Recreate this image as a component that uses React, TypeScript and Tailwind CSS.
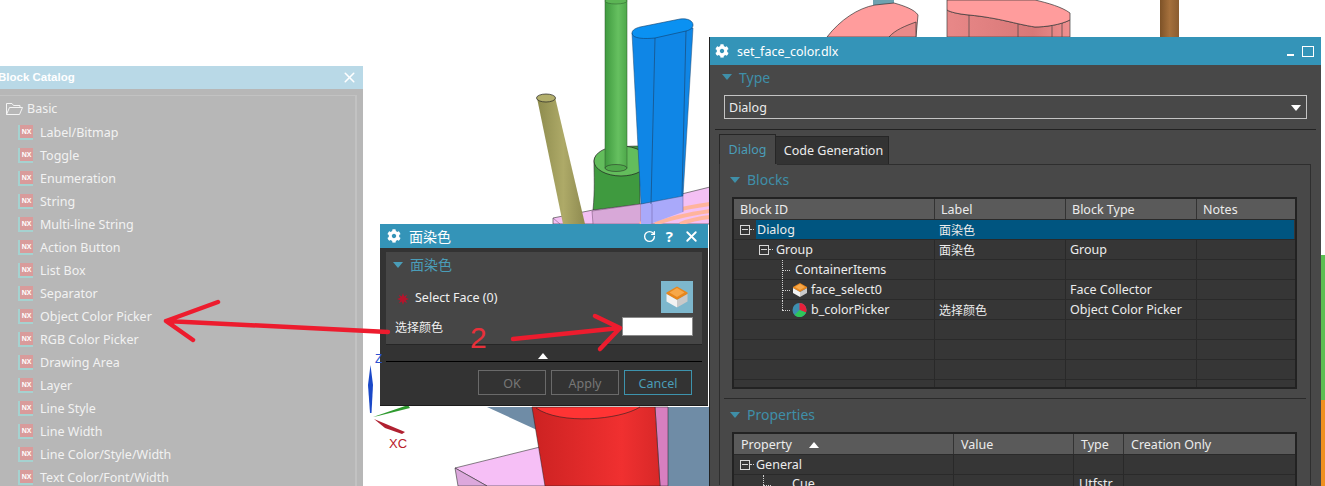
import React from "react";
import { FaCog } from "react-icons/fa";
import { RotateCw, X } from "lucide-react";

const FONT = "font-['Noto_Sans','Noto_Sans_CJK_SC',sans-serif]";

function T({ children, className = "" }: { children?: React.ReactNode; className?: string }) {
  return <span className={`pt-[2px] ${className}`}>{children}</span>;
}

function Tri({ className = "" }: { className?: string }) {
  return (
    <svg width="10" height="6" viewBox="0 0 10 6" className={className}>
      <path d="M0 0H10L5 6Z" fill="currentColor" />
    </svg>
  );
}

function CubeIcon({ size = 16 }: { size?: number }) {
  return (
    <svg width={size} height={size} viewBox="0 0 16 16">
      <path d="M8 1L15 5V6L8 10L1 6V5Z" fill="#e8861c" />
      <path d="M1 6L8 10V15L1 11Z" fill="#f2f2f2" />
      <path d="M15 6L8 10V15L15 11Z" fill="#c9c9c9" />
      <path d="M8 2L13 5L8 8L3 5Z" fill="#f7a84a" />
    </svg>
  );
}

function PieIcon() {
  return (
    <svg width="15" height="16" viewBox="0 0 15 16">
      <circle cx="7.5" cy="8" r="7" fill="#3d8fb0" />
      <path d="M7.5 8V1A7 7 0 0 1 14 10.5Z" fill="#e8203a" />
      <path d="M7.5 8L14 10.500A7 7 0 0 1 2.500 13Z" fill="#2fc65a" />
    </svg>
  );
}

function Expander() {
  return (
    <span className="relative block w-[10px] h-[10px] border border-[#d8d8d8]">
      <span className="absolute left-[1px] right-[1px] top-[3px] h-[1px] bg-[#d8d8d8]" />
      <span className="absolute left-[9px] w-[4px] top-[3px] border-t border-dotted border-[#d0d0d0]" />
    </span>
  );
}

function NxIcon() {
  return (
    <span className="relative block w-[15px] h-[15px] shrink-0 border-l-2 border-b-2 border-[#a5d2d0]">
      <span className="flex items-center justify-center w-[13px] h-[13px] bg-[#d99b9b] text-white text-[7px] leading-none font-bold font-['Liberation_Sans',sans-serif]">
        NX
      </span>
    </span>
  );
}

function Background() {
  return (
    <svg className="absolute inset-0" width="1325" height="486" viewBox="0 0 1325 486">
      <defs>
        <linearGradient id="gr" x1="0" x2="1" y1="0" y2="0">
          <stop offset="0" stopColor="#3f9a3f" />
          <stop offset="0.6" stopColor="#66c060" />
          <stop offset="1" stopColor="#4ea84a" />
        </linearGradient>
        <linearGradient id="ol" x1="0" x2="1" y1="0" y2="0">
          <stop offset="0" stopColor="#8d8b4d" />
          <stop offset="0.55" stopColor="#aeaa68" />
          <stop offset="1" stopColor="#8e8a50" />
        </linearGradient>
        <linearGradient id="br" x1="0" x2="1" y1="0" y2="0">
          <stop offset="0" stopColor="#7d5227" />
          <stop offset="0.5" stopColor="#a5703c" />
          <stop offset="1" stopColor="#8a5c30" />
        </linearGradient>
        <linearGradient id="rd" x1="0" x2="1" y1="0" y2="0">
          <stop offset="0" stopColor="#cc2222" />
          <stop offset="0.7" stopColor="#f03030" />
          <stop offset="1" stopColor="#d82828" />
        </linearGradient>
        <linearGradient id="pk" x1="0" x2="1" y1="0" y2="0">
          <stop offset="0" stopColor="#e88888" />
          <stop offset="0.7" stopColor="#d87878" />
          <stop offset="1" stopColor="#f09090" />
        </linearGradient>
      </defs>

      {/* top right shapes */}
      <rect x="873" y="0" width="21" height="5" fill="#6ea2b0" />
      <path d="M827 37C840 20 858 8 875 5L894 3C905 6 915 10 918 15L916 37Z" fill="#ff9c9c" stroke="#333" strokeWidth="0.7" />
      <path d="M889 37C895 30 905 26 916 22V37Z" fill="#e88a8a" stroke="#333" strokeWidth="0.7" />
      <path d="M947 10V37H1070V20C1060 25 1045 27 1035 27C1015 24 1000 18 969 15C958 14 950 12 947 10Z" fill="url(#pk)" stroke="#444" strokeWidth="0.7" />
      <path d="M947 0V10C950 12 958 14 969 15C1000 18 1015 24 1035 27C1045 27 1060 25 1070 20V13C1062 7 1048 3 1035 0Z" fill="#ff9c9c" stroke="#333" strokeWidth="0.7" />
      <path d="M969 15V37M1018 24V37M1052 25V37M1062 23V37" stroke="#444" strokeWidth="0.7" />
      <rect x="1160" y="0" width="19" height="37" fill="url(#br)" />

      {/* green pin and base */}
      <path d="M594 162C594 150 615 146 640 146V210H593C595 190 594 175 594 162Z" fill="#3f9a3f" stroke="#333" strokeWidth="0.6" />
      <ellipse cx="621" cy="161" rx="27" ry="15" fill="#63bd5c" stroke="#222" strokeWidth="0.7" />
      <rect x="605" y="0" width="22" height="168" fill="url(#gr)" stroke="#2c5a2c" strokeWidth="0.5" />
      <ellipse cx="616" cy="168" rx="11" ry="3.500" fill="#4ea84a" stroke="#222" strokeWidth="0.5" />
      <ellipse cx="616" cy="1" rx="11" ry="3" fill="#5cb555" stroke="#2c5a2c" strokeWidth="0.5" />

      {/* pink base top */}
      <path d="M553 218L593 210L641 204L710 187V224H553Z" fill="#f4c0f4" stroke="#333" strokeWidth="0.6" />
      <path d="M553 218L560 224" stroke="#6a4a6a" strokeWidth="0.5" />
      <path d="M592 211L641 204V224H593Z" fill="#d8a8d8" stroke="#6a4a6a" strokeWidth="0.5" />
      <path d="M640 224C655 215 680 208 710 204M655 224C670 218 690 214 710 211M680 224C690 220 700 218 710 217" stroke="#ffb49c" strokeWidth="4" fill="none" />
      <path d="M641 204L683 196V212L650 224H641Z" fill="#a9a9fa" />
      <path d="M652 204V224M683 196V212" stroke="#6a5a9a" strokeWidth="0.5" />

      {/* blue wedge */}
      <path d="M632 33L641 204L683 196L693 28Z" fill="#0f86e6" stroke="#1e4a75" strokeWidth="0.5" />
      <path d="M655 38L651 204M686 30L682 196" stroke="#1b4a78" strokeWidth="0.7" />
      <path d="M632 33C632 30 636 28 640 27L680 19C688 18 693 21 693 25C693 28 690 30 686 31L655 38C645 39 632 39 632 33Z" fill="#0a91f2" stroke="#13406b" strokeWidth="0.6" />

      {/* olive pin */}
      <path d="M537 98L555 97L585 224H563Z" fill="url(#ol)" />
      <ellipse cx="546" cy="98" rx="9.500" ry="4" fill="#b3af6c" stroke="#222" strokeWidth="0.7" />

      {/* lower model */}
      <path d="M487 407H710V486H668V430L655 407L537 430Z" fill="#6f8ca6" />
      <path d="M655 407H668V486H660Z" fill="#d87fc0" stroke="#222" strokeWidth="0.5" />
      <path d="M455 468L540 447L548 486H487Z" fill="#f6bff6" stroke="#333" strokeWidth="0.6" />
      <path d="M455 468L487 486H458Z" fill="#dca8dc" stroke="#333" strokeWidth="0.6" />
      <path d="M532 407L545 486H660L655 407Z" fill="url(#rd)" stroke="#222" strokeWidth="0.5" />
      <path d="M536 408C560 425 620 420 640 407" fill="#ff3434" stroke="#222" strokeWidth="0.6" />

      {/* axes */}
      <path d="M370.500 365L368 385L370 413H371.500L373 385Z" fill="#1a48c8" />
      <path d="M373 417L408 405L410 408L378 416Z" fill="#2f9a2f" />
      <path d="M374 419L405 432L402 434L385 428Z" fill="#b02030" />

      {/* right strip */}
      <rect x="1321" y="255" width="4" height="145" fill="#5cbf52" />
      <rect x="1321" y="400" width="4" height="86" fill="#f09020" />
    </svg>
  );
}

const catalog = [
  "Label/Bitmap",
  "Toggle",
  "Enumeration",
  "String",
  "Multi-line String",
  "Action Button",
  "List Box",
  "Separator",
  "Object Color Picker",
  "RGB Color Picker",
  "Drawing Area",
  "Layer",
  "Line Style",
  "Line Width",
  "Line Color/Style/Width",
  "Text Color/Font/Width",
];

function BlockCatalog() {
  return (
    <div className="absolute left-0 top-[66px] w-[363px] h-[420px] bg-[#b7b7b7] overflow-hidden">
      <div className="h-[23px] bg-[#b9d9e7] flex items-center justify-between pr-[5px]">
        <span className="ml-[-2px] text-[11.5px] font-bold text-white font-['Liberation_Sans',sans-serif]">Block Catalog</span>
        <X size={17} strokeWidth={2.2} className="text-white" />
      </div>
      <div className="relative mt-[6px] mr-[6px] border-t border-r-[2px] border-[#c2c2c2] h-[400px]">
        <div className="flex items-center h-[23px] mt-[1px] pl-[6px] gap-[4px] text-[12.5px] text-[#f2f2f2]">
          <svg width="17" height="12" viewBox="0 0 17 12" fill="none" stroke="#f4f4f4" strokeWidth="1">
            <path d="M.5 11.500V.5H6L7.500 2.500H14V4.500M.5 11.500H13.500L16.500 4.500H3.500L.5 11.500Z" />
          </svg>
          <T>Basic</T>
        </div>
        <div className="flex flex-col mt-[1px]">
          {catalog.map((c) => (
            <div key={c} className="flex items-center h-[23px] pl-[18px] gap-[7px] text-[12.5px] text-[#f2f2f2] whitespace-nowrap">
              <NxIcon />
              <T>{c}</T>
            </div>
          ))}
        </div>
      </div>
    </div>
  );
}

function FaceDialog() {
  return (
    <div className="absolute left-[380px] top-[224px] w-[328px] h-[182px] bg-[#333333] border-b border-[#1c1c1c]">
      <div className="h-[24px] bg-[#3494b8] flex items-center pl-[7px] pr-[8px] text-white">
        <FaCog size={14} />
        <span className="ml-[8px] text-[14px]">面染色</span>
        <span className="ml-auto flex items-center gap-[10px]">
          <RotateCw size={13} strokeWidth={2.5} />
          <span className="text-[15px] font-bold leading-none">?</span>
          <X size={17} strokeWidth={2.6} />
        </span>
      </div>
      <div className="mx-[6px] mt-[4px] h-[93px] bg-[#464646] border-b border-[#262626] relative">
        <div className="flex items-center h-[25px] mb-[1px] pl-[7px] gap-[7px] text-[14px] text-[#4a9db8]">
          <Tri />
          <span>面染色</span>
        </div>
        <div className="flex items-start justify-between pl-[11px] pr-[9px] mt-[4px]">
          <div className="flex items-center gap-[6px] h-[32px] text-[12.5px] text-[#f0f0f0]">
            <svg width="12" height="12" viewBox="0 0 12 12" className="mt-[3px]">
              <path d="M6 0L7.200 3.400L10.200 1.800L8.600 4.800L12 6L8.600 7.200L10.200 10.200L7.200 8.600L6 12L4.800 8.600L1.800 10.200L3.400 7.200L0 6L3.400 4.800L1.800 1.800L4.800 3.400Z" fill="#b5142c" />
            </svg>
            <span className="pt-[3px]">Select Face (0)</span>
          </div>
          <div className="w-[32px] h-[32px] bg-[#7db7cd] flex items-center justify-center">
            <CubeIcon size={24} />
          </div>
        </div>
        <div className="flex items-center justify-between pl-[9px] pr-[9px] mt-[3px] text-[12px] text-[#f0f0f0]">
          <span className="pt-[3px]">选择颜色</span>
          <span className="block w-[71px] h-[19px] bg-white border border-[#8a8a8a]" />
        </div>
      </div>
      <div className="mx-[6px] h-[17px] border-b border-black flex items-center justify-center text-white pt-[5px] pr-[2px]">
        <svg width="10" height="6" viewBox="0 0 10 6"><path d="M5 0L10 6H0Z" fill="currentColor" /></svg>
      </div>
      <div className="flex justify-end gap-[5px] pr-[16px] mt-[8px] text-[12.5px]">
        <span className="w-[68px] h-[25px] pt-[3px] border border-[#6a6a6a] flex items-center justify-center text-[#777]">OK</span>
        <span className="w-[68px] h-[25px] pt-[3px] border border-[#6a6a6a] flex items-center justify-center text-[#777]">Apply</span>
        <span className="w-[68px] h-[25px] pt-[3px] border border-[#3d93ad] flex items-center justify-center text-[#4a9db8]">Cancel</span>
      </div>
    </div>
  );
}

function Cell({ className, children }: { className: string; children?: React.ReactNode }) {
  return (
    <div className={`h-full flex items-center shrink-0 border-r border-[#292929] whitespace-nowrap overflow-hidden ${className}`}>
      {children}
    </div>
  );
}

function HeaderCell({ className, children }: { className: string; children?: React.ReactNode }) {
  return (
    <div className={`h-full flex items-center shrink-0 border-r border-[#333] pt-[2px] whitespace-nowrap ${className}`}>
      {children}
    </div>
  );
}

function Row({ children }: { children?: React.ReactNode }) {
  return <div className="h-[20px] flex text-[12.5px] text-[#ececec] border-b border-[#2a2a2a]">{children}</div>;
}

function TreeLine({ last }: { last?: boolean }) {
  return (
    <span className="relative block w-[10px] h-full shrink-0 ml-[48px]">
      <span className={`absolute left-0 top-0 border-l border-dotted border-[#d0d0d0] ${last ? "h-[10px]" : "h-full"}`} />
      <span className="absolute left-0 top-[10px] w-[8px] border-t border-dotted border-[#d0d0d0]" />
    </span>
  );
}

function BlocksTable() {
  const c1 = "w-[201px]";
  const c2 = "w-[131px]";
  const c3 = "w-[131px]";
  const c4 = "w-[99px]";
  const rows: [React.ReactNode, string, string][] = [
    [
      <span className="flex items-center h-full">
        <span className="ml-[25px] mr-[4px]"><Expander /></span>
        <T className="ml-[3px]">Group</T>
      </span>,
      "面染色",
      "Group",
    ],
    [
      <span className="flex items-center h-full">
        <TreeLine />
        <T className="ml-[3px]">ContainerItems</T>
      </span>,
      "",
      "",
    ],
    [
      <span className="flex items-center h-full">
        <TreeLine />
        <CubeIcon />
        <T className="ml-[3px]">face_select0</T>
      </span>,
      "",
      "Face Collector",
    ],
    [
      <span className="flex items-center h-full">
        <TreeLine last />
        <PieIcon />
        <T className="ml-[4px]">b_colorPicker</T>
      </span>,
      "选择颜色",
      "Object Color Picker",
    ],
  ];
  return (
    <div className="ml-[12px] w-[565px] h-[192px] bg-[#363636] border-2 border-[#222] overflow-hidden">
      <div className="h-[20px] bg-[#5a5a5a] flex text-[12.5px] text-[#ececec] border-b border-[#2a2a2a] box-content">
        <HeaderCell className={`${c1} pl-[6px]`}>Block ID</HeaderCell>
        <HeaderCell className={`${c2} pl-[6px]`}>Label</HeaderCell>
        <HeaderCell className={`${c3} pl-[6px]`}>Block Type</HeaderCell>
        <HeaderCell className={`${c4} pl-[6px]`}>Notes</HeaderCell>
      </div>
      <Row>
        <Cell className={`${c1} border-r-0`}>
          <span className="ml-[6px] mr-[6px]"><Expander /></span>
          <span className="flex-1 h-full bg-[#005580] flex items-center pl-[1px] pt-[2px]">Dialog</span>
        </Cell>
        <Cell className={`${c2} bg-[#005580] border-r-0 pl-[4px]`}>
          <T className="text-[12px]">面染色</T>
        </Cell>
        <Cell className={`${c3} bg-[#005580] border-r-0`} />
        <Cell className="w-[97px] bg-[#005580] border-r-0" />
      </Row>
      {rows.map(([a, b, t], i) => (
        <Row key={i}>
          <Cell className={c1}>{a}</Cell>
          <Cell className={`${c2} pl-[4px]`}><T className="text-[12px]">{b}</T></Cell>
          <Cell className={`${c3} pl-[4px]`}><T>{t}</T></Cell>
          <Cell className={c4} />
        </Row>
      ))}
      {[0, 1, 2, 3].map((i) => (
        <Row key={`e${i}`}>
          <Cell className={c1} />
          <Cell className={c2} />
          <Cell className={c3} />
          <Cell className={c4} />
        </Row>
      ))}
    </div>
  );
}

function PropsTable() {
  const c1 = "w-[220px]";
  const c2 = "w-[120px]";
  const c3 = "w-[50px]";
  const c4 = "w-[172px]";
  return (
    <div className="ml-[12px] w-[565px] h-[60px] bg-[#363636] border-t-2 border-x-2 border-[#222] overflow-hidden">
      <div className="h-[21px] bg-[#5a5a5a] flex text-[12.5px] text-[#ececec] border-b border-[#2a2a2a]">
        <HeaderCell className={`${c1} pl-[7px]`}>
          <span>Property</span>
          <svg width="10" height="6" viewBox="0 0 10 6" className="ml-[17px]"><path d="M5 0L10 6H0Z" fill="#fff" /></svg>
        </HeaderCell>
        <HeaderCell className={`${c2} pl-[7px]`}>Value</HeaderCell>
        <HeaderCell className={`${c3} pl-[7px]`}>Type</HeaderCell>
        <HeaderCell className={`${c4} pl-[7px]`}>Creation Only</HeaderCell>
      </div>
      <Row>
        <Cell className={c1}>
          <span className="ml-[6px] mr-[6px]"><Expander /></span>
          <T>General</T>
        </Cell>
        <Cell className={c2} />
        <Cell className={c3} />
        <Cell className={c4} />
      </Row>
      <Row>
        <Cell className={c1}>
          <span className="relative ml-[29px] mr-[21px] block w-[8px] h-full">
            <span className="absolute left-0 top-0 h-[10px] border-l border-dotted border-[#d0d0d0]" />
            <span className="absolute left-0 top-[10px] w-[8px] border-t border-dotted border-[#d0d0d0]" />
          </span>
          <span>Cue</span>
        </Cell>
        <Cell className={c2} />
        <Cell className={`${c3} pl-[5px]`}>Utfstr</Cell>
        <Cell className={c4} />
      </Row>
    </div>
  );
}

function MainWindow() {
  return (
    <div className="absolute left-[709px] top-[37px] w-[612px] h-[449px] bg-[#484848] overflow-hidden border-l border-[#222]">
      <div className="h-[28px] bg-[#3494b8] flex items-center pl-[5px] pr-[7px] text-white">
        <FaCog size={14} />
        <T className="ml-[8px] text-[12.5px]">set_face_color.dlx</T>
        <span className="ml-auto flex items-center gap-[8px]">
          <span className="block w-[7px] h-[2px] bg-white mt-[8px]" />
          <span className="block w-[12px] h-[11px] border border-white" />
        </span>
      </div>
      <div className="h-[26px] pb-[2px] flex items-center pl-[12px] gap-[7px] text-[14px] text-[#3f8fa8]">
        <Tri />
        <span>Type</span>
      </div>
      <div className="mx-[14px] mt-[4px] h-[24px] pt-[2px] border border-[#c4c4c4] flex items-center justify-between pl-[4px] pr-[5px] text-[12.5px] text-[#ececec]">
        <span>Dialog</span>
        <Tri className="text-white" />
      </div>
      <div className="mt-[10px] ml-[5px] mr-[5px] border-t border-[#222]" />
      <div className="mt-[4px] ml-[9px] flex items-end h-[30px] text-[12.5px]">
        <div className="w-[57px] h-[30px] pt-[2px] border-t border-x border-[#262626] flex items-center justify-center text-[#4a9db8]">Dialog</div>
        <div className="w-[113px] h-[28px] pt-[2px] pl-[3px] bg-[#333] border-t border-r border-[#262626] flex items-center justify-center text-[#ececec]">Code Generation</div>
      </div>
      <div className="ml-[9px] w-[592px] h-[321px] border-x border-[#2e2e2e] relative">
        <div className="absolute left-[57px] right-0 top-0 border-t border-[#2e2e2e]" />
        <div className="h-[33px] pb-[2px] flex items-center pl-[10px] gap-[7px] text-[14px] text-[#3f8fa8]">
          <Tri />
          <span>Blocks</span>
        </div>
        <BlocksTable />
        <div className="mt-[9px] mx-[4px] border-t border-[#2a2a2a]" />
        <div className="h-[33px] pb-[2px] flex items-center pl-[10px] gap-[7px] text-[14px] text-[#3f8fa8]">
          <Tri />
          <span>Properties</span>
        </div>
        <PropsTable />
      </div>
    </div>
  );
}

function Arrows() {
  return (
    <div className="absolute inset-0 pointer-events-none">
      <svg className="absolute inset-0" width="1325" height="486" viewBox="0 0 1325 486" fill="none" stroke="#ed1c2e" strokeWidth="4.5" strokeLinecap="round" strokeLinejoin="round">
        <path d="M388 332L166 321M218 302L166 321L193 340" />
        <path d="M513 339L620 328M595 316L620 328L600 349" />
      </svg>
      <span className="absolute left-[470px] top-[320px] text-[30px] leading-[36px] text-[#e8303a] font-['Liberation_Sans',sans-serif] font-light">2</span>
      <span className="absolute left-[375px] top-[352px] text-[12px] leading-[14px] text-[#2a50d0] font-['Liberation_Sans',sans-serif]">Z</span>
      <span className="absolute left-[389px] top-[436px] text-[13px] leading-[15px] text-[#b8202a] font-['Liberation_Sans',sans-serif]">XC</span>
    </div>
  );
}

export default function App() {
  return (
    <div className={`relative w-[1325px] h-[486px] bg-white overflow-hidden ${FONT}`}>
      <Background />
      <BlockCatalog />
      <FaceDialog />
      <MainWindow />
      <Arrows />
    </div>
  );
}
